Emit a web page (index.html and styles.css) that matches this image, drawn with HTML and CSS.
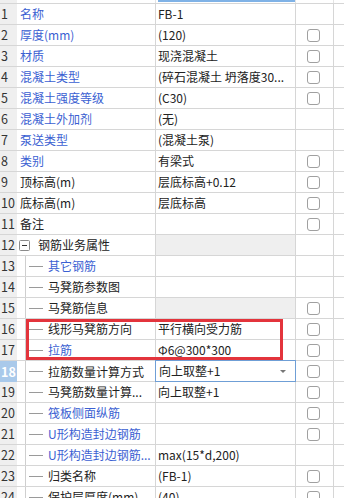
FILE: index.html
```html
<!DOCTYPE html>
<html lang="zh-CN">
<head>
    <meta charset="UTF-8">
    <meta name="viewport" content="width=device-width, initial-scale=1.0">
    <title>属性编辑</title>
    <link rel="stylesheet" href="styles.css">
</head>
<body>
    <div class="grid">
        <div class="row head">
            <div class="num"></div>
            <div class="name"></div>
            <div class="value"><span class="active-bar"></span></div>
            <div class="check"></div>
            <div class="fill"></div>
        </div>

        <div class="row"><div class="num">1</div><div class="name blue">名称</div><div class="value">FB-1</div><div class="check"></div><div class="fill"></div></div>
        <div class="row"><div class="num">2</div><div class="name blue">厚度(mm)</div><div class="value">(120)</div><div class="check"><span class="box"></span></div><div class="fill"></div></div>
        <div class="row"><div class="num">3</div><div class="name blue">材质</div><div class="value">现浇混凝土</div><div class="check"><span class="box"></span></div><div class="fill"></div></div>
        <div class="row"><div class="num">4</div><div class="name blue">混凝土类型</div><div class="value">(碎石混凝土 坍落度30...</div><div class="check"><span class="box"></span></div><div class="fill"></div></div>
        <div class="row"><div class="num">5</div><div class="name blue">混凝土强度等级</div><div class="value">(C30)</div><div class="check"><span class="box"></span></div><div class="fill"></div></div>
        <div class="row"><div class="num">6</div><div class="name blue">混凝土外加剂</div><div class="value">(无)</div><div class="check"></div><div class="fill"></div></div>
        <div class="row"><div class="num">7</div><div class="name blue">泵送类型</div><div class="value">(混凝土泵)</div><div class="check"></div><div class="fill"></div></div>
        <div class="row"><div class="num">8</div><div class="name blue">类别</div><div class="value">有梁式</div><div class="check"><span class="box"></span></div><div class="fill"></div></div>
        <div class="row"><div class="num">9</div><div class="name">顶标高(m)</div><div class="value">层底标高+0.12</div><div class="check"><span class="box"></span></div><div class="fill"></div></div>
        <div class="row"><div class="num">10</div><div class="name">底标高(m)</div><div class="value">层底标高</div><div class="check"><span class="box"></span></div><div class="fill"></div></div>
        <div class="row"><div class="num">11</div><div class="name">备注</div><div class="value"></div><div class="check"><span class="box"></span></div><div class="fill"></div></div>

        <div class="row group">
            <div class="num">12</div>
            <div class="name">
                <svg class="toggle" width="11" height="11" viewBox="0 0 11 11"><rect x="0.5" y="0.5" width="10" height="10" rx="1" fill="#fff" stroke="#8a8a8a"/><line x1="3" y1="5.5" x2="8" y2="5.5" stroke="#333"/></svg>
                <span class="group-label">钢筋业务属性</span>
            </div>
            <div class="value locked"></div>
            <div class="check"></div>
            <div class="fill"></div>
        </div>

        <div class="row child"><div class="num">13</div><div class="name blue"><span class="branch"></span>其它钢筋</div><div class="value"></div><div class="check"></div><div class="fill"></div></div>
        <div class="row child"><div class="num">14</div><div class="name"><span class="branch"></span>马凳筋参数图</div><div class="value"></div><div class="check"></div><div class="fill"></div></div>
        <div class="row child"><div class="num">15</div><div class="name"><span class="branch"></span>马凳筋信息</div><div class="value locked"></div><div class="check"><span class="box"></span></div><div class="fill"></div></div>
        <div class="row child"><div class="num">16</div><div class="name"><span class="branch"></span>线形马凳筋方向</div><div class="value">平行横向受力筋</div><div class="check"><span class="box"></span></div><div class="fill"></div></div>
        <div class="row child"><div class="num">17</div><div class="name blue"><span class="branch"></span>拉筋</div><div class="value">Φ6@300*300</div><div class="check"><span class="box"></span></div><div class="fill"></div></div>
        <div class="row child current">
            <div class="num">18</div>
            <div class="name"><span class="branch"></span>拉筋数量计算方式</div>
            <div class="value editing">向上取整+1<span class="caret"></span></div>
            <div class="check"><span class="box"></span></div>
            <div class="fill"></div>
        </div>
        <div class="row child"><div class="num">19</div><div class="name"><span class="branch"></span>马凳筋数量计算...</div><div class="value">向上取整+1</div><div class="check"><span class="box"></span></div><div class="fill"></div></div>
        <div class="row child"><div class="num">20</div><div class="name blue"><span class="branch"></span>筏板侧面纵筋</div><div class="value"></div><div class="check"><span class="box"></span></div><div class="fill"></div></div>
        <div class="row child"><div class="num">21</div><div class="name blue"><span class="branch"></span>U形构造封边钢筋</div><div class="value"></div><div class="check"><span class="box"></span></div><div class="fill"></div></div>
        <div class="row child"><div class="num">22</div><div class="name blue"><span class="branch"></span>U形构造封边钢筋...</div><div class="value">max(15*d,200)</div><div class="check"></div><div class="fill"></div></div>
        <div class="row child"><div class="num">23</div><div class="name"><span class="branch"></span>归类名称</div><div class="value">(FB-1)</div><div class="check"><span class="box"></span></div><div class="fill"></div></div>
        <div class="row child"><div class="num">24</div><div class="name"><span class="branch"></span>保护层厚度(mm)</div><div class="value">(40)</div><div class="check"><span class="box"></span></div><div class="fill"></div></div>
    </div>

    <!-- annotation drawn over rows 16-17 -->
    <div class="highlight"></div>
</body>
</html>
```

FILE: styles.css
```css
html, body {
    margin: 0;
    padding: 0;
    background: #fff;
    overflow: hidden;
}

body {
    position: relative;
    width: 344px;
    height: 498px;
    font-family: "Noto Sans CJK SC", "Noto Sans", sans-serif;
    font-size: 12px;
    color: #222;
}

.row {
    display: grid;
    grid-template-columns: 17px 139px 140px 38px 1fr;
    height: 21px;
    box-sizing: border-box;
    border-top: 1px solid #d6d6d6;
}

.row.head {
    height: 3px;
    border-top: none;
}

.row > div {
    display: flex;
    align-items: center;
    box-sizing: border-box;
    white-space: nowrap;
    overflow: hidden;
    line-height: 20px;
}

.num {
    background: #efefef;
    color: #333;
    padding-left: 1px;
    font-size: 12.5px;
}

.name {
    border-right: 1px solid #d6d6d6;
    padding-left: 3px;
}

.value {
    border-right: 1px solid #d6d6d6;
    padding-left: 2px;
    position: relative;
}

.check {
    border-right: 1px solid #d6d6d6;
    justify-content: center;
}

.head .name,
.head .value,
.head .check {
    border-right-color: #e4e4e4;
}

.active-bar {
    display: block;
    width: 100%;
    height: 2px;
    align-self: flex-start;
    background: #7fb2e6;
}

.blue {
    color: #3b5fd2;
}

.box {
    display: block;
    width: 11px;
    height: 11px;
    border: 1px solid #a0a0a0;
    border-radius: 3px;
    background: #fff;
    margin-right: 3px;
}

.locked {
    background: #efefef;
}

.group .name {
    padding-left: 2px;
}

.toggle {
    flex: none;
    margin-right: 8px;
}

.child .name {
    padding-left: 12px;
    background: linear-gradient(#cfcfcf, #cfcfcf) no-repeat 8px 0 / 1px 100%;
}

.branch {
    display: inline-block;
    flex: none;
    width: 14px;
    height: 1px;
    background: #9a9a9a;
    margin-right: 5px;
}

.current .num {
    background: #a9c9ea;
    color: #fff;
    font-weight: bold;
}

.value.editing {
    border: 1px solid #6f9fd6;
    margin-left: -1px;
    margin-top: -1px;
    height: 22px;
    padding-left: 3px;
    overflow: visible;
}

.caret {
    position: absolute;
    right: 9px;
    top: 9px;
    width: 0;
    height: 0;
    border-left: 3px solid transparent;
    border-right: 3px solid transparent;
    border-top: 3px solid #777;
}

.highlight {
    position: absolute;
    left: 26px;
    top: 319px;
    width: 257px;
    height: 41px;
    box-sizing: border-box;
    border: 3px solid #e3343c;
    pointer-events: none;
}
```
